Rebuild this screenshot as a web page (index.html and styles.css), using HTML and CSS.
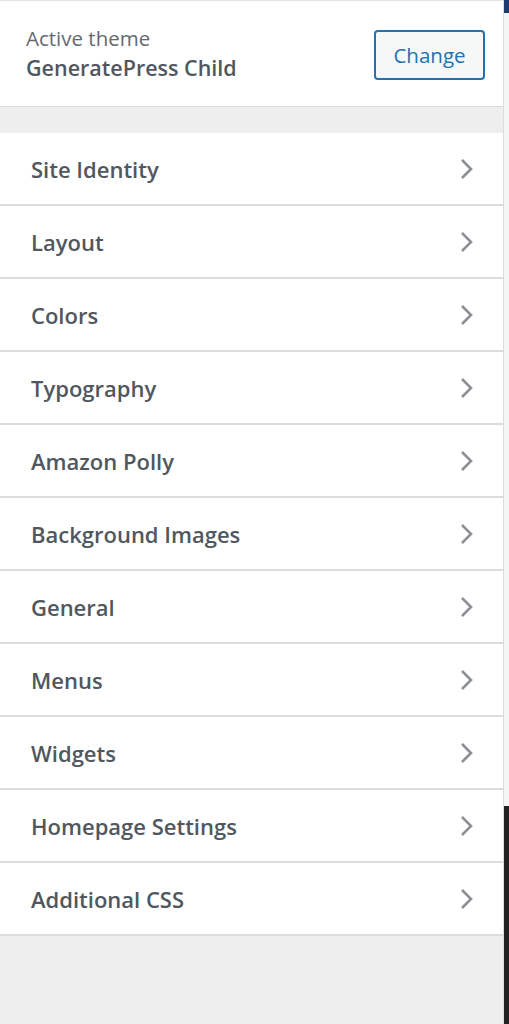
FILE: index.html
```html
<!DOCTYPE html>
<html>
<head>
<meta charset="utf-8">
<link rel="stylesheet" href="styles.css">
</head>
<body>
<div class="layout">
  <div class="panel">
    <div class="theme">
      <div class="theme-info">
        <div class="theme-label">Active theme</div>
        <div class="theme-name">GeneratePress Child</div>
      </div>
      <button class="change-btn">Change</button>
    </div>
    <div class="spacer"></div>
    <ul class="menu">
      <li class="item"><span>Site Identity</span><svg class="chev" viewBox="0 0 14 22"><path d="M2 2 L11 11 L2 20" /></svg></li>
      <li class="item"><span>Layout</span><svg class="chev" viewBox="0 0 14 22"><path d="M2 2 L11 11 L2 20" /></svg></li>
      <li class="item"><span>Colors</span><svg class="chev" viewBox="0 0 14 22"><path d="M2 2 L11 11 L2 20" /></svg></li>
      <li class="item"><span>Typography</span><svg class="chev" viewBox="0 0 14 22"><path d="M2 2 L11 11 L2 20" /></svg></li>
      <li class="item"><span>Amazon Polly</span><svg class="chev" viewBox="0 0 14 22"><path d="M2 2 L11 11 L2 20" /></svg></li>
      <li class="item"><span>Background Images</span><svg class="chev" viewBox="0 0 14 22"><path d="M2 2 L11 11 L2 20" /></svg></li>
      <li class="item"><span>General</span><svg class="chev" viewBox="0 0 14 22"><path d="M2 2 L11 11 L2 20" /></svg></li>
      <li class="item"><span>Menus</span><svg class="chev" viewBox="0 0 14 22"><path d="M2 2 L11 11 L2 20" /></svg></li>
      <li class="item"><span>Widgets</span><svg class="chev" viewBox="0 0 14 22"><path d="M2 2 L11 11 L2 20" /></svg></li>
      <li class="item"><span>Homepage Settings</span><svg class="chev" viewBox="0 0 14 22"><path d="M2 2 L11 11 L2 20" /></svg></li>
      <li class="item"><span>Additional CSS</span><svg class="chev" viewBox="0 0 14 22"><path d="M2 2 L11 11 L2 20" /></svg></li>
    </ul>
  </div>
  <div class="preview">
    <div class="pv-top"></div>
    <div class="pv-mid"></div>
    <div class="pv-bottom"></div>
  </div>
</div>
</body>
</html>
```
FILE: styles.css
```css
* { box-sizing: border-box; }
html, body { margin: 0; padding: 0; height: 100%; }
body {
  font-family: "Open Sans", "Noto Sans", sans-serif;
  background: #eeeeee;
  overflow: hidden;
}
.layout {
  display: flex;
  width: 509px;
  height: 1024px;
}
.panel {
  width: 504px;
  background: #eeeeee;
  border-right: 1px solid #dcdcde;
  flex: none;
}
.theme {
  background: #fff;
  border-top: 1px solid #e4e4e4;
  border-bottom: 1px solid #dcdcde;
  height: 107px;
  display: flex;
  align-items: center;
  justify-content: space-between;
  padding: 0 18px 0 26px;
}
.theme-info { margin-top: -2px; }
.theme-label {
  font-size: 20.5px;
  color: #646970;
  line-height: 30px;
}
.theme-name {
  font-size: 21.5px;
  font-weight: 600;
  color: #50575e;
  line-height: 30px;
}
.change-btn {
  font-family: inherit;
  font-size: 20.5px;
  color: #2271b1;
  background: #f6f7f7;
  border: 2px solid #2271b1;
  border-radius: 4px;
  width: 111px;
  height: 50px;
  margin-top: 3px;
  padding: 0;
}
.spacer { height: 26px; }
.menu {
  list-style: none;
  margin: 0;
  padding: 0;
}
.item {
  height: 73px;
  background: #fff;
  border-bottom: 2px solid #dcdcde;
  display: flex;
  align-items: center;
  justify-content: space-between;
  padding: 0 29px 0 31px;
  font-size: 22px;
  font-weight: 600;
  color: #50575e;
}
.item span { margin-top: 1px; }
.chev {
  width: 14px;
  height: 22px;
  fill: none;
  stroke: #8c8f94;
  stroke-width: 2.6;
}
.preview {
  flex: 1;
  display: flex;
  flex-direction: column;
}
.pv-top { height: 13px; background: #1d3b6e; }
.pv-mid { height: 793px; background: #f4f5f5; }
.pv-bottom { flex: 1; background: #222; }
```
